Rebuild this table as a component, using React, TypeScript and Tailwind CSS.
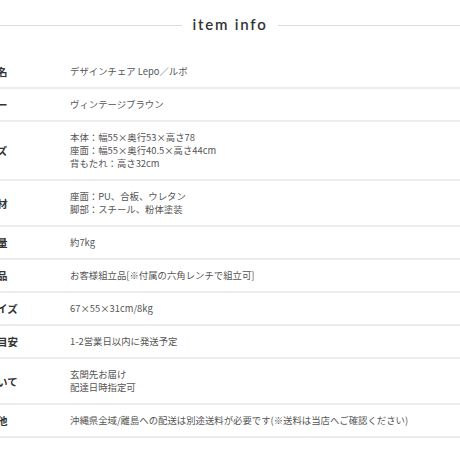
const ROWS: { label: string; lines: string[] }[] = [
  { label: "商品名", lines: ["デザインチェア Lepo／ルボ"] },
  { label: "カラー", lines: ["ヴィンテージブラウン"] },
  { label: "サイズ", lines: ["本体：幅55×奥行53×高さ78", "座面：幅55×奥行40.5×高さ44cm", "背もたれ：高さ32cm"] },
  { label: "主素材", lines: ["座面：PU、合板、ウレタン", "脚部：スチール、粉体塗装"] },
  { label: "総重量", lines: ["約7kg"] },
  { label: "組立品", lines: ["お客様組立品[※付属の六角レンチで組立可]"] },
  { label: "箱サイズ", lines: ["67×55×31cm/8kg"] },
  { label: "発送目安", lines: ["1-2営業日以内に発送予定"] },
  { label: "について", lines: ["玄関先お届け", "配達日時指定可"] },
  { label: "送料他", lines: ["沖縄県全域/離島への配送は別途送料が必要です(※送料は当店へご確認ください)"] },
];

export default function App() {
  return (
    <div className="w-[460px] h-[460px] overflow-hidden bg-white font-['Noto_Sans_CJK_JP',sans-serif]">
      <div className="flex items-center gap-[10px] pt-[4px] h-[44px]">
        <div className="flex-1 h-px bg-[#dcdcdc] mt-[2px]" />
        <h2 className="font-['Lato','Noto_Sans_CJK_JP',sans-serif] text-[15px] font-semibold tracking-[0.12em] text-[#333] leading-none">
          item info
        </h2>
        <div className="flex-1 h-px bg-[#dcdcdc] mt-[2px]" />
      </div>
      <div className="mt-[12px]">
        {ROWS.map((row) => (
          <div key={row.label} className="flex items-center border-b-2 border-[#ededed] py-[9px]">
            <div className="w-[70px] shrink-0 overflow-visible">
              <span className="block -ml-[24px] whitespace-nowrap text-[10.5px] font-bold text-[#333] leading-[13px]">
                {row.label}
              </span>
            </div>
            <div className="text-[9.4px] leading-[13px] text-[#555] whitespace-nowrap">
              {row.lines.map((l) => (
                <div key={l}>{l}</div>
              ))}
            </div>
          </div>
        ))}
      </div>
    </div>
  );
}
